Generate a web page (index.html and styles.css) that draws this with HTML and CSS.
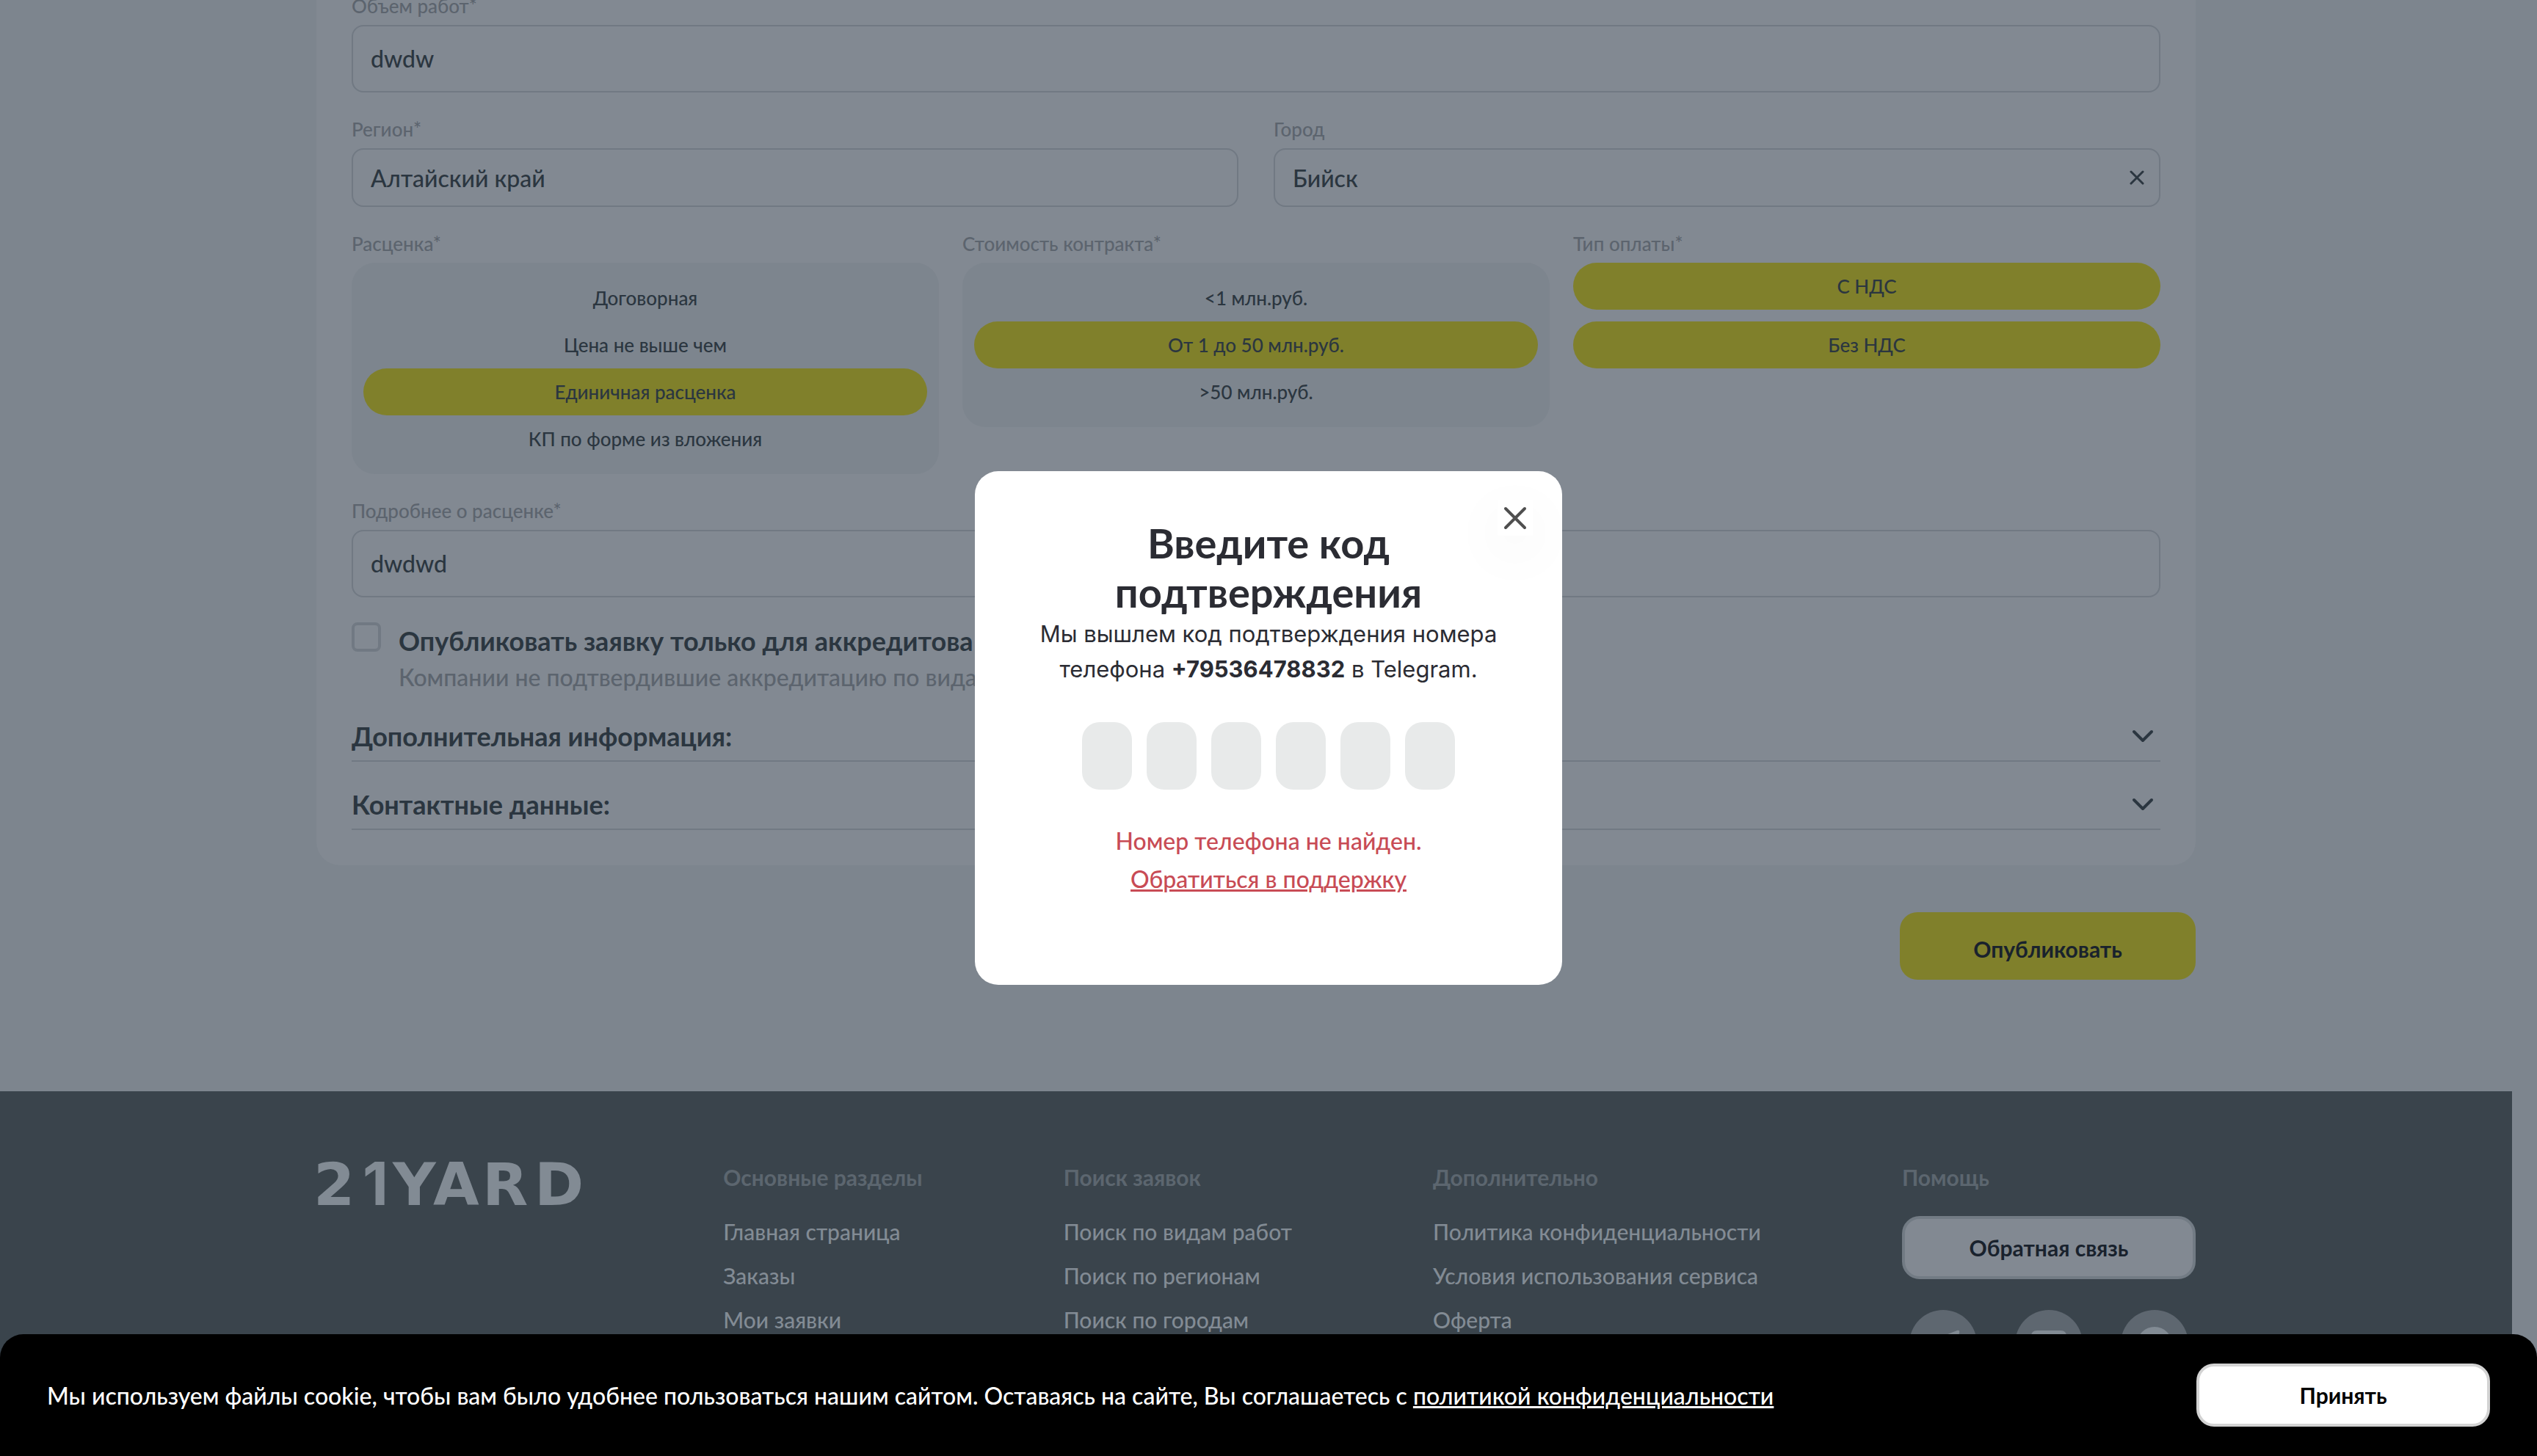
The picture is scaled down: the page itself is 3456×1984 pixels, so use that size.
FILE: index.html
```html
<!DOCTYPE html>
<html lang="ru">
<head>
<meta charset="utf-8">
<meta name="viewport" content="width=device-width, initial-scale=1">
<title>21YARD — новая заявка</title>
<link rel="stylesheet" href="styles.css">
</head>
<body>
<div class="page">
  <main class="container">
    <form class="card">
      <div class="field">
        <label class="label" for="volume">Объем работ*</label>
        <input class="input input-tall" id="volume" type="text" value="dwdw">
      </div>
      <div class="row row-two">
        <div class="field">
          <label class="label" for="region">Регион*</label>
          <input class="input" id="region" type="text" value="Алтайский край">
        </div>
        <div class="field">
          <label class="label" for="city">Город</label>
          <div class="input-wrap">
            <input class="input" id="city" type="text" value="Бийск">
            <button class="clear" type="button" aria-label="Очистить">
              <svg width="20" height="20" viewBox="0 0 20 20" fill="none" stroke="currentColor" stroke-width="3" stroke-linecap="round"><path d="M2 2 18 18M18 2 2 18"/></svg>
            </button>
          </div>
        </div>
      </div>
      <div class="row row-three">
        <div class="field" role="radiogroup" aria-labelledby="rate">
          <span class="label" id="rate">Расценка*</span>
          <div class="options">
            <label class="option"><input type="radio" name="rate">Договорная</label>
            <label class="option"><input type="radio" name="rate">Цена не выше чем</label>
            <label class="option"><input type="radio" name="rate" checked>Единичная расценка</label>
            <label class="option"><input type="radio" name="rate">КП по форме из вложения</label>
          </div>
        </div>
        <div class="field" role="radiogroup" aria-labelledby="cost">
          <span class="label" id="cost">Стоимость контракта*</span>
          <div class="options">
            <label class="option"><input type="radio" name="cost">&lt;1 млн.руб.</label>
            <label class="option"><input type="radio" name="cost" checked>От 1 до 50 млн.руб.</label>
            <label class="option"><input type="radio" name="cost">&gt;50 млн.руб.</label>
          </div>
        </div>
        <div class="field" role="group" aria-labelledby="pay">
          <span class="label" id="pay">Тип оплаты*</span>
          <div class="toggles">
            <label class="option"><input type="checkbox" checked>С НДС</label>
            <label class="option"><input type="checkbox" checked>Без НДС</label>
          </div>
        </div>
      </div>
      <div class="field">
        <label class="label" for="details">Подробнее о расценке*</label>
        <input class="input input-tall" id="details" type="text" value="dwdwd">
      </div>
      <div class="accredited">
        <input class="checkbox" id="accredited" type="checkbox">
        <label for="accredited">
          <span class="accredited-title">Опубликовать заявку только для аккредитова</span>
          <span class="accredited-note">Компании не подтвердившие аккредитацию по вида</span>
        </label>
      </div>
      <div class="sections">
        <button class="section" type="button">Дополнительная информация:
          <svg width="32" height="20" viewBox="0 0 32 20" fill="none" stroke="currentColor" stroke-width="4" stroke-linecap="round" stroke-linejoin="round"><path d="M4 4 16 16 28 4"/></svg>
        </button>
        <button class="section" type="button">Контактные данные:
          <svg width="32" height="20" viewBox="0 0 32 20" fill="none" stroke="currentColor" stroke-width="4" stroke-linecap="round" stroke-linejoin="round"><path d="M4 4 16 16 28 4"/></svg>
        </button>
      </div>
    </form>
    <button class="publish" type="button">Опубликовать</button>
  </main>

  <footer class="footer">
    <div class="container footer-inner">
      <a class="logo" href="#" aria-label="21YARD">
        <svg width="362" height="60" viewBox="0 0 362 60" fill="currentColor">
          <text y="59"><tspan x="-4">2</tspan><tspan class="logo-one" x="63">1</tspan><tspan x="104 159 226 297">YARD</tspan></text>
        </svg>
      </a>
      <nav class="column">
        <h2>Основные разделы</h2>
        <ul>
          <li><a href="#">Главная страница</a></li>
          <li><a href="#">Заказы</a></li>
          <li><a href="#">Мои заявки</a></li>
        </ul>
      </nav>
      <nav class="column">
        <h2>Поиск заявок</h2>
        <ul>
          <li><a href="#">Поиск по видам работ</a></li>
          <li><a href="#">Поиск по регионам</a></li>
          <li><a href="#">Поиск по городам</a></li>
        </ul>
      </nav>
      <nav class="column">
        <h2>Дополнительно</h2>
        <ul>
          <li><a href="#">Политика конфиденциальности</a></li>
          <li><a href="#">Условия использования сервиса</a></li>
          <li><a href="#">Оферта</a></li>
        </ul>
      </nav>
      <div class="column help">
        <h2>Помощь</h2>
        <button class="feedback" type="button">Обратная связь</button>
        <div class="socials">
          <a href="#" aria-label="Telegram"><svg width="92" height="92" viewBox="0 0 92 92"><path fill="currentColor" d="M65 28c2-1 4 0 3 3l-7 33c-1 3-3 3-5 2l-11-8-5 5c-2 2-4 1-4-1l-1-10-11-4c-3-1-3-3 0-4z"/></svg></a>
          <a href="#" aria-label="YouTube"><svg width="92" height="92" viewBox="0 0 92 92"><path fill="currentColor" fill-rule="evenodd" d="M30 28h32q8 0 8 8v20q0 8-8 8H30q-8 0-8-8V36q0-8 8-8zm10 9v18l16-9z"/></svg></a>
          <a href="#" aria-label="WhatsApp"><svg width="92" height="92" viewBox="0 0 92 92"><circle cx="46" cy="47" r="24" fill="currentColor"/></svg></a>
        </div>
      </div>
    </div>
  </footer>
</div>

<div class="overlay">
  <section class="modal" role="dialog" aria-modal="true" aria-labelledby="modal-title">
    <button class="close" type="button" aria-label="Закрыть">
      <svg width="32" height="32" viewBox="0 0 32 32" fill="none" stroke="currentColor" stroke-width="4" stroke-linecap="round"><path d="M3 3 29 29M29 3 3 29"/></svg>
    </button>
    <h1 id="modal-title">Введите код подтверждения</h1>
    <p class="modal-text">Мы вышлем код подтверждения номера телефона <b>+79536478832</b> в Telegram.</p>
    <div class="code">
      <input type="text" maxlength="1" aria-label="Цифра 1">
      <input type="text" maxlength="1" aria-label="Цифра 2">
      <input type="text" maxlength="1" aria-label="Цифра 3">
      <input type="text" maxlength="1" aria-label="Цифра 4">
      <input type="text" maxlength="1" aria-label="Цифра 5">
      <input type="text" maxlength="1" aria-label="Цифра 6">
    </div>
    <p class="error">Номер телефона не найден.<br><a href="#">Обратиться в поддержку</a></p>
  </section>
</div>

<div class="cookie">
  <p>Мы используем файлы cookie, чтобы вам было удобнее пользоваться нашим сайтом. Оставаясь на сайте, Вы соглашаетесь с <a href="#">политикой конфиденциальности</a></p>
  <button class="accept" type="button">Принять</button>
</div>
</body>
</html>
```
FILE: styles.css
```css
:root {
  --page: #7d858e;
  --card: #828992;
  --line: #717983;
  --muted: #5c646e;
  --text: #2b3640;
  --dark: #19222d;
  --yellow: #80802b;
  --footer: #3a444c;
}

* { box-sizing: border-box; }

body {
  height: 100vh;
  margin: 0;
  overflow: hidden;
  background: var(--page);
  color: var(--text);
  font-family: Lato, "Noto Sans", sans-serif;
  font-size: 32px;
}

h1, h2, p, ul { margin: 0; padding: 0; }
li { list-style: none; }
a { color: inherit; text-decoration: none; }
button { border: 0; padding: 0; background: none; color: inherit; font: inherit; cursor: pointer; }
svg { display: block; }

.page { margin-right: 34px; }
.container { max-width: 2560px; margin: 0 auto; }

/* Form card */
.card {
  display: flex;
  flex-direction: column;
  gap: 34px;
  margin-top: -56px;
  padding: 48px;
  border-radius: 32px;
  background: var(--card);
}
main.container { display: flow-root; }
.row { display: grid; }
.row-two { grid-template-columns: repeat(2, 1fr); gap: 48px; }
.row-three { grid-template-columns: repeat(3, 1fr); gap: 32px; align-items: start; }
.field { display: flex; flex-direction: column; gap: 10px; }
.label { color: var(--muted); font-size: 26px; line-height: 32px; font-weight: 500; }

.input {
  width: 100%;
  height: 80px;
  padding: 0 24px;
  border: 2px solid var(--line);
  border-radius: 16px;
  background: transparent;
  color: var(--text);
  font: 500 32px Lato, "Noto Sans", sans-serif;
}
.input-tall { height: 92px; padding-bottom: 2px; }
.input-wrap { position: relative; }
.clear { position: absolute; top: 30px; right: 22px; }

.options { padding: 16px; border-radius: 32px; background: var(--page); }
.toggles { display: flex; flex-direction: column; gap: 16px; }
.option {
  display: block;
  border-radius: 32px;
  font-size: 26px;
  line-height: 64px;
  font-weight: 500;
  text-align: center;
}
.option input { position: absolute; opacity: 0; }
.option:has(input:checked) { background: var(--yellow); }

.accredited { display: flex; gap: 24px; }
.checkbox {
  appearance: none;
  flex: none;
  width: 40px;
  height: 40px;
  margin: 0;
  border: 4px solid var(--line);
  border-radius: 8px;
}
.accredited-title, .accredited-note { display: block; }
.accredited-title { font-size: 36px; line-height: 50px; font-weight: 700; }
.accredited-note { color: var(--muted); font-size: 32px; line-height: 50px; font-weight: 500; }

.sections { display: flex; flex-direction: column; gap: 25px; margin-top: -12px; }
.section {
  display: flex;
  align-items: center;
  justify-content: space-between;
  height: 68px;
  padding-right: 8px;
  border-bottom: 2px solid var(--line);
  font-size: 36px;
  font-weight: 700;
}

.publish {
  display: block;
  width: 403px;
  height: 92px;
  margin: 64px 0 152px auto;
  padding-top: 8px;
  border-radius: 24px;
  background: var(--yellow);
  color: var(--dark);
  font-size: 30px;
  font-weight: 700;
}

/* Footer */
.footer { padding: 96px 0; background: var(--footer); font-size: 30px; line-height: 42px; }
.footer-inner { display: flex; justify-content: space-between; }
.logo { color: #828b94; font: bold 81px "DejaVu Sans", sans-serif; }
.logo svg { overflow: visible; }
.logo-one { font-family: Inter, sans-serif; }
.column { display: flex; flex-direction: column; gap: 32px; color: #828b94; font-weight: 500; }
.column h2 { color: #5c666f; font-size: 30px; font-weight: 700; }
.column ul { display: flex; flex-direction: column; gap: 18px; }
.help { width: 400px; }
.feedback, .accept {
  width: 400px;
  height: 86px;
  border-radius: 24px;
  font-size: 30px;
  font-weight: 700;
}
.feedback { border: 4px solid #727b84; background: var(--card); color: var(--dark); }
.socials { display: flex; justify-content: center; gap: 52px; padding-top: 10px; }
.socials a { border-radius: 50%; background: #5e6770; color: #828b94; }

/* Confirmation dialog */
.overlay { position: fixed; inset: 0; display: grid; place-items: center; }
.modal {
  position: relative;
  width: 800px;
  min-height: 700px;
  padding: 64px 80px;
  border-radius: 32px;
  background: #fff;
  color: #2b2c33;
  text-align: center;
}
.modal h1 { padding: 0 80px; font-size: 56px; line-height: 67px; font-weight: 700; }
.modal-text { font: 400 31px/48px Inter, sans-serif; }
.modal-text b { font-weight: 700; }
.close {
  position: absolute;
  top: 40px;
  right: 40px;
  display: grid;
  place-items: center;
  width: 48px;
  height: 48px;
  background: #fff;
  color: #4f4f4f;
  box-shadow: 0 20px 80px rgba(0, 0, 0, .06);
}
.code { display: flex; justify-content: center; gap: 20px; margin: 48px 0 44px; }
.code input {
  width: 68px;
  height: 92px;
  border: 0;
  border-radius: 24px;
  background: #e8eaea;
  font-size: 32px;
  text-align: center;
}
.error { color: #c84b55; font-size: 32px; line-height: 52px; font-weight: 500; }
.error a { text-decoration: underline; text-decoration-thickness: 3px; }

/* Cookie notice */
.cookie {
  position: fixed;
  inset: auto 0 0;
  display: flex;
  align-items: center;
  justify-content: space-between;
  padding: 40px 64px;
  border-radius: 32px 32px 0 0;
  background: #000;
  color: #fff;
  font-weight: 500;
}
.cookie p a { text-decoration: underline; text-decoration-thickness: 3px; }
.accept { border: 4px solid #d3d3d3; background: #fff; color: #000; }
```
